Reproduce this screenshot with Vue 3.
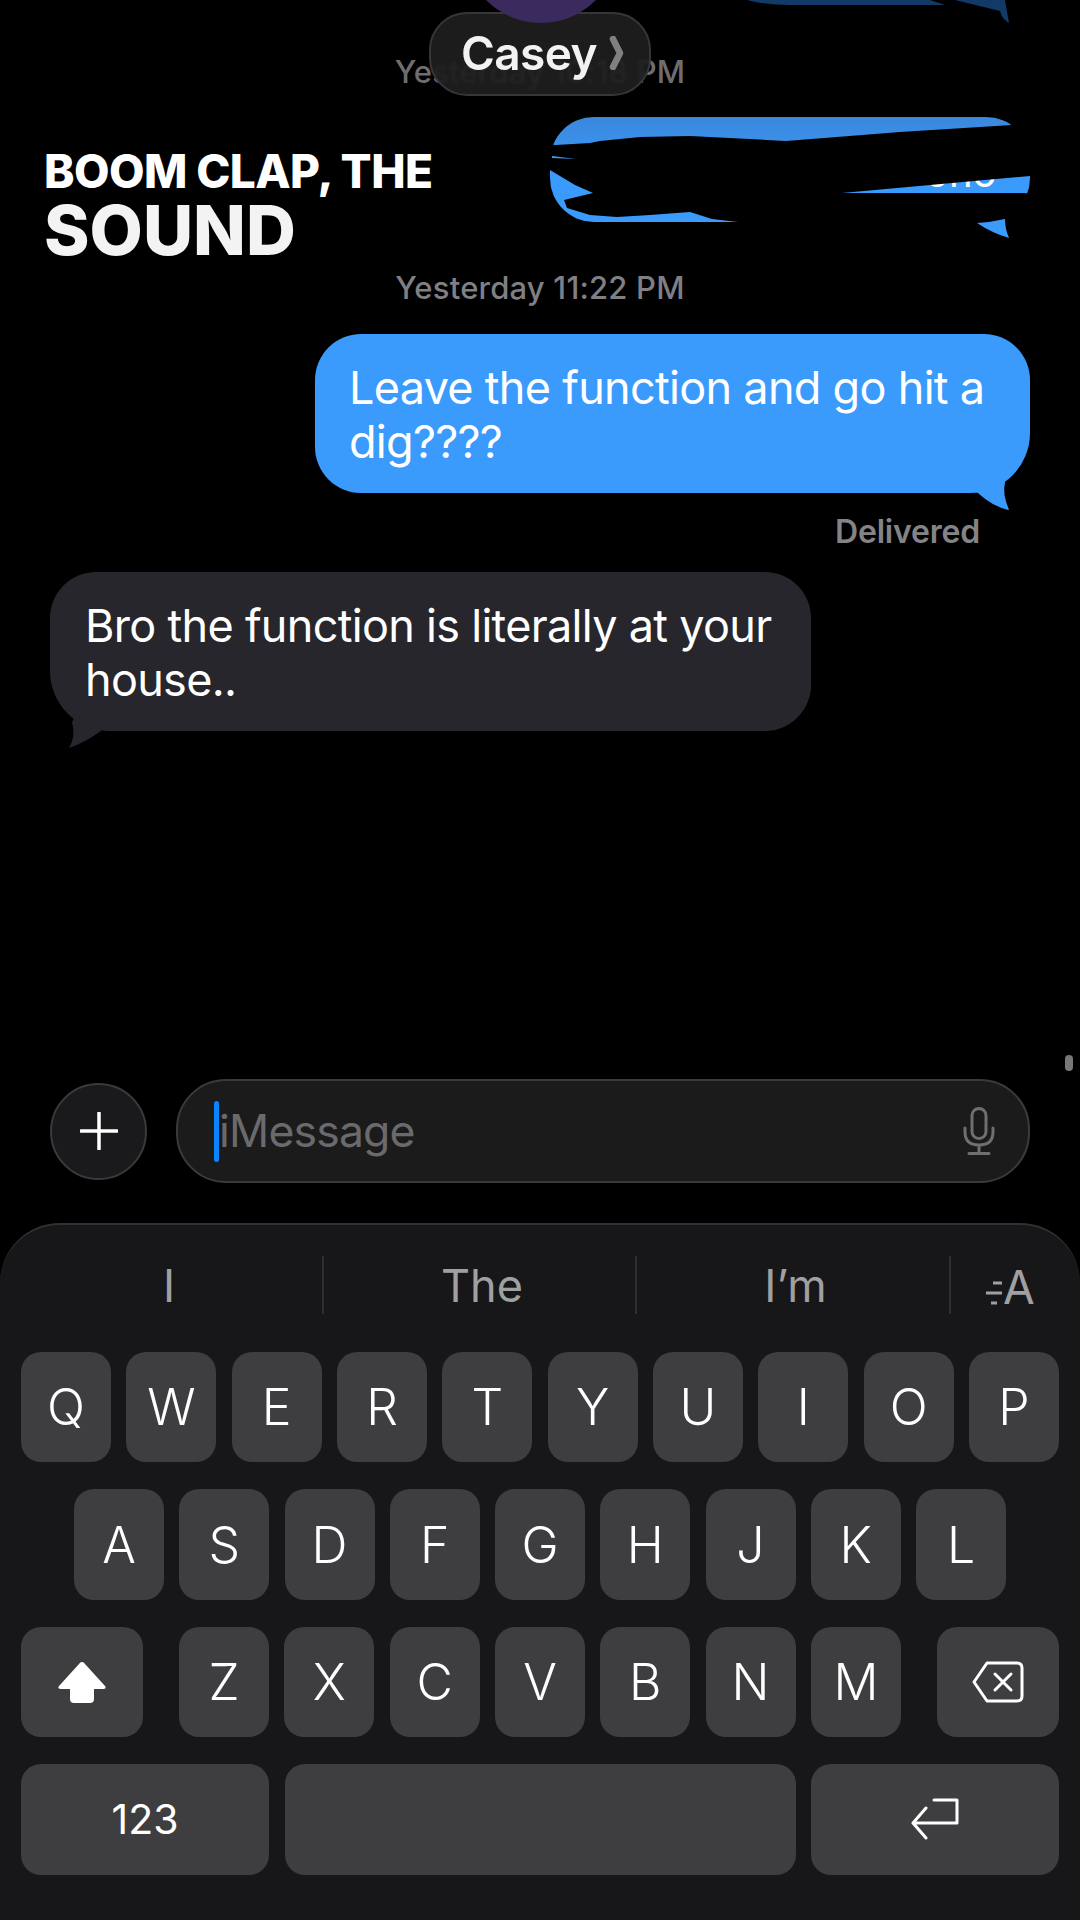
<script setup>
const rowOne = ['Q', 'W', 'E', 'R', 'T', 'Y', 'U', 'I', 'O', 'P']
const rowTwo = ['A', 'S', 'D', 'F', 'G', 'H', 'J', 'K', 'L']
const rowThree = ['Z', 'X', 'C', 'V', 'B', 'N', 'M']
const suggestions = ['I', 'The', 'I’m']
</script>

<template>
  <div class="phone">
    <!-- header floats over the thread -->
    <svg class="prev-bubble" width="270" height="26" viewBox="745 0 270 26">
      <path d="M747 0 H930 L945 5 H790 Q765 5 747 0 Z M955 0 H1005 L1009 23 Q1002 19 1000 11 Z" fill="#123a66" />
    </svg>
    <div class="nav-pill">
      <span class="nav-name">Casey</span>
      <svg width="16" height="34" viewBox="0 0 16 34">
        <path d="M4 3 L11 17 L4 31" fill="none" stroke="#808080" stroke-width="6.5" stroke-linecap="round" stroke-linejoin="round" />
      </svg>
    </div>
    <div class="avatar"></div>

    <main class="thread">
      <p class="stamp stamp-first">Yesterday 10:18 PM</p>

      <div class="intro-row">
        <div class="now-playing">
          <div class="np-line">BOOM CLAP, THE</div>
          <div class="np-big">SOUND</div>
        </div>
        <svg class="redacted" width="490" height="135" viewBox="545 110 490 135">
          <defs>
            <linearGradient id="blueFade" x1="0" y1="0" x2="0" y2="1">
              <stop offset="0" stop-color="#3a88dc" />
              <stop offset="0.6" stop-color="#3a9bfd" />
            </linearGradient>
          </defs>
          <rect x="550" y="117" width="480" height="105" rx="44" fill="url(#blueFade)" />
          <text x="925" y="187" class="under-text">ono</text>
          <path d="M540 144 L556 145 L590 143 L600 141 L640 137 L690 136 L786 141 L900 132 L1012 125 L1040 130 L1040 175 L1030 176 L842 193 L1024 193 L1040 195 L1040 230 L740 230 L738 222 L712 219 L690 212 L650 215 L617 217 L590 215 L567 208 L564 200 L593 193 L575 185 L550 170 L540 165 Z" fill="#000" />
          <path d="M552 156 L576 159 L552 158 Z" fill="#3a9bfd" />
          <path d="M977 223 Q992 222 1005 219 Q1005 229 1009 238 Q992 233 977 223 Z" fill="#3a9bfd" />
        </svg>
      </div>

      <p class="stamp stamp-second">Yesterday 11:22 PM</p>

      <div class="bubble bubble-out">
        Leave the function and go hit a dig????
        <svg class="tail tail-out" width="44" height="40" viewBox="0 0 44 40">
          <path d="M0 0 H36 L36 10 Q33 20 40 37 Q24 34 9 20 L0 15 Z" fill="#3a9bfd" />
        </svg>
      </div>
      <p class="delivered">Delivered</p>

      <div class="bubble bubble-in">
        Bro the function is literally at your house..
        <svg class="tail tail-in" width="40" height="40" viewBox="0 0 40 40">
          <path d="M12 0 L6 11 Q10 26 3 37 Q18 32 35 20 L35 0 Z" fill="#26262c" />
        </svg>
      </div>
    </main>

    <div class="scroll-thumb"></div>

    <div class="composer">
      <button class="plus-btn">
        <svg width="38" height="38" viewBox="0 0 38 38">
          <path d="M19 1 V37 M1 19 H37" stroke="#fff" stroke-width="3.5" stroke-linecap="round" />
        </svg>
      </button>
      <div class="input-box">
        <span class="caret"></span>
        <span class="placeholder">iMessage</span>
        <svg class="mic" width="32" height="48" viewBox="0 0 32 48">
          <rect x="9" y="1.5" width="14" height="30" rx="7" fill="none" stroke="#6f6f6f" stroke-width="3" />
          <path d="M2 21 V25 Q2 38 16 38 Q30 38 30 25 V21 M16 38 V46 M6 46.5 H26" fill="none" stroke="#6f6f6f" stroke-width="3" stroke-linecap="round" />
        </svg>
      </div>
    </div>

    <section class="keyboard">
      <div class="suggest-bar">
        <div v-for="word in suggestions" :key="word" class="suggest">{{ word }}</div>
        <div class="format-btn">
          <svg width="18" height="26" viewBox="0 0 18 26">
            <path d="M8 3 H17 M1 13 H17 M6 23 H12" stroke="#a0a0a0" stroke-width="3" />
          </svg>
          <span>A</span>
        </div>
      </div>

      <div class="keys">
        <div class="row">
          <div v-for="k in rowOne" :key="k" class="key">{{ k }}</div>
        </div>
        <div class="row row-mid">
          <div v-for="k in rowTwo" :key="k" class="key">{{ k }}</div>
        </div>
        <div class="row row-third">
          <div class="key key-action">
            <svg width="50" height="42" viewBox="0 0 50 42">
              <path d="M25 1 Q27 1 28 3 L48 25 Q50 28 46 28 H37 V38 Q37 42 33 42 H17 Q13 42 13 38 V28 H4 Q0 28 2 25 L22 3 Q23 1 25 1 Z" fill="#fff" />
            </svg>
          </div>
          <div class="letter-group">
            <div v-for="k in rowThree" :key="k" class="key">{{ k }}</div>
          </div>
          <div class="key key-action">
            <svg width="52" height="42" viewBox="0 0 52 42">
              <path d="M15 2 H45 Q50 2 50 7 V35 Q50 40 45 40 H15 L2 21 Z" fill="none" stroke="#fff" stroke-width="3" stroke-linejoin="round" />
              <path d="M23 13 L39 29 M39 13 L23 29" stroke="#fff" stroke-width="3" stroke-linecap="round" />
            </svg>
          </div>
        </div>
        <div class="row">
          <div class="key key-wide key-num">123</div>
          <div class="key key-space"></div>
          <div class="key key-wide">
            <svg width="50" height="42" viewBox="0 0 50 42">
              <path d="M24 2 H47 V25 H4 M16 10 L3 25 L16 40" fill="none" stroke="#fff" stroke-width="3" stroke-linecap="round" stroke-linejoin="round" />
            </svg>
          </div>
        </div>
      </div>
    </section>
  </div>
</template>

<style scoped>
.phone {
  position: relative;
  width: 1080px;
  height: 1920px;
  overflow: hidden;
  background: #000;
  display: flex;
  flex-direction: column;
  font-family: Inter, "Liberation Sans", sans-serif;
  color: #fff;
}

.prev-bubble {
  position: absolute;
  top: 0;
  left: 745px;
}

.nav-pill {
  position: absolute;
  top: 12px;
  left: 429px;
  width: 222px;
  height: 84px;
  box-sizing: border-box;
  padding-bottom: 2px;
  padding-left: 30px;
  display: flex;
  align-items: center;
  gap: 12px;
  background: rgba(30, 30, 32, 0.92);
  backdrop-filter: blur(1.5px);
  border: 2px solid #363638;
  border-radius: 38px;
  z-index: 2;
}

.nav-name {
  font-size: 46px;
  font-weight: 600;
  letter-spacing: -0.6px;
  color: #f2f2f2;
}

.avatar {
  position: absolute;
  top: -131px;
  left: 464px;
  width: 154px;
  height: 154px;
  border-radius: 50%;
  background: #3b2a5e;
  z-index: 3;
}

.thread {
  flex: 1;
  display: flex;
  flex-direction: column;
}

.stamp {
  margin: 0;
  font-size: 31px;
  line-height: 36px;
  font-weight: 500;
  text-align: center;
  letter-spacing: 0.2px;
  color: #7f7f84;
}

.stamp-first {
  margin-top: 54px;
  color: #6e6e72;
}

.stamp-second {
  margin-top: 25px;
}

.intro-row {
  margin-top: 20px;
  height: 135px;
  display: flex;
  justify-content: space-between;
  padding-left: 44px;
  padding-right: 45px;
}

.redacted {
  flex-shrink: 0;
}

.now-playing {
  padding-top: 39px;
  font-weight: 800;
  color: #fff;
}

.np-line {
  font-size: 46px;
  line-height: 44px;
  letter-spacing: -0.6px;
  white-space: nowrap;
}

.np-big {
  margin-top: 3px;
  font-size: 69px;
  line-height: 68px;
  letter-spacing: 0;
  color: #f3f3f3;
}

.under-text {
  font-size: 40px;
  fill: #fff;
}

.bubble {
  position: relative;
  box-sizing: border-box;
  height: 159px;
  padding: 27px 34px 0;
  font-size: 45px;
  line-height: 54px;
  letter-spacing: -0.7px;
}

.bubble-out {
  align-self: flex-end;
  width: 715px;
  margin-top: 28px;
  margin-right: 50px;
  background: #3a9bfd;
  border-radius: 46px 46px 60px 46px;
}

.bubble-in {
  align-self: flex-start;
  width: 761px;
  margin-top: 22px;
  margin-left: 50px;
  padding-left: 35px;
  background: #26262c;
  border-radius: 46px 46px 46px 60px;
}

.tail {
  position: absolute;
}

.tail-out {
  right: 17px;
  bottom: -20px;
}

.tail-in {
  left: 16px;
  bottom: -20px;
}

.delivered {
  margin: 21px 100px 0 0;
  font-size: 32px;
  line-height: 36px;
  font-weight: 600;
  text-align: right;
  letter-spacing: -0.2px;
  color: #848487;
}

.scroll-thumb {
  position: absolute;
  top: 1055px;
  left: 1065px;
  width: 8px;
  height: 16px;
  border-radius: 4px;
  background: #777;
}

.composer {
  display: flex;
  align-items: center;
  gap: 29px;
  padding: 0 50px;
  height: 104px;
  margin-bottom: 40px;
}

.plus-btn {
  flex-shrink: 0;
  width: 97px;
  height: 97px;
  padding: 0;
  display: flex;
  align-items: center;
  justify-content: center;
  background: #1a1a1c;
  border: 2px solid #3a3a3c;
  border-radius: 50%;
}

.input-box {
  flex: 1;
  height: 104px;
  box-sizing: border-box;
  display: flex;
  align-items: center;
  padding: 0 33px 0 36px;
  background: #1b1b1c;
  border: 2px solid #3a3a3c;
  border-radius: 50px;
}

.caret {
  width: 5px;
  height: 61px;
  border-radius: 3px;
  background: #0a84ff;
}

.placeholder {
  flex: 1;
  font-size: 44.5px;
  letter-spacing: -0.8px;
  color: #6a6a6c;
}

.keyboard {
  flex-shrink: 0;
  height: 697px;
  box-sizing: border-box;
  padding-top: 31px;
  background: #17171a;
  border-top: 2px solid #303134;
  border-radius: 60px 60px 0 0;
}

.suggest-bar {
  display: grid;
  grid-template-columns: 324px 313px 314px 1fr;
  height: 58px;
}

.suggest {
  display: flex;
  align-items: center;
  justify-content: center;
  padding-left: 5px;
  font-size: 45px;
  color: #a0a0a0;
  border-right: 2px solid #2e2f32;
}

.suggest:first-child {
  padding-left: 16px;
}

.format-btn {
  display: flex;
  align-items: flex-end;
  gap: 0;
  padding-left: 34px;
  padding-top: 4px;
  font-size: 46px;
  line-height: 54px;
  color: #a0a0a0;
}

.format-btn svg {
  margin-bottom: 8px;
}

.keys {
  margin-top: 38px;
  padding: 0 21px;
  display: flex;
  flex-direction: column;
  gap: 27px;
}

.row {
  display: flex;
  justify-content: space-between;
  height: 110.4px;
}

.row-mid {
  padding: 0 53px;
}

.letter-group {
  display: flex;
  gap: 15.3px;
}

.key {
  width: 90px;
  display: flex;
  align-items: center;
  justify-content: center;
  background: #3e3e40;
  border-radius: 20px;
  font-size: 50px;
  font-weight: 350;
}

.key-action {
  width: 122px;
}

.key-wide {
  width: 248px;
}

.key-space {
  width: 511px;
}

.key-num {
  font-size: 41px;
  font-weight: 400;
}
</style>

<style>
html,
body {
  margin: 0;
  background: #000;
}
</style>
